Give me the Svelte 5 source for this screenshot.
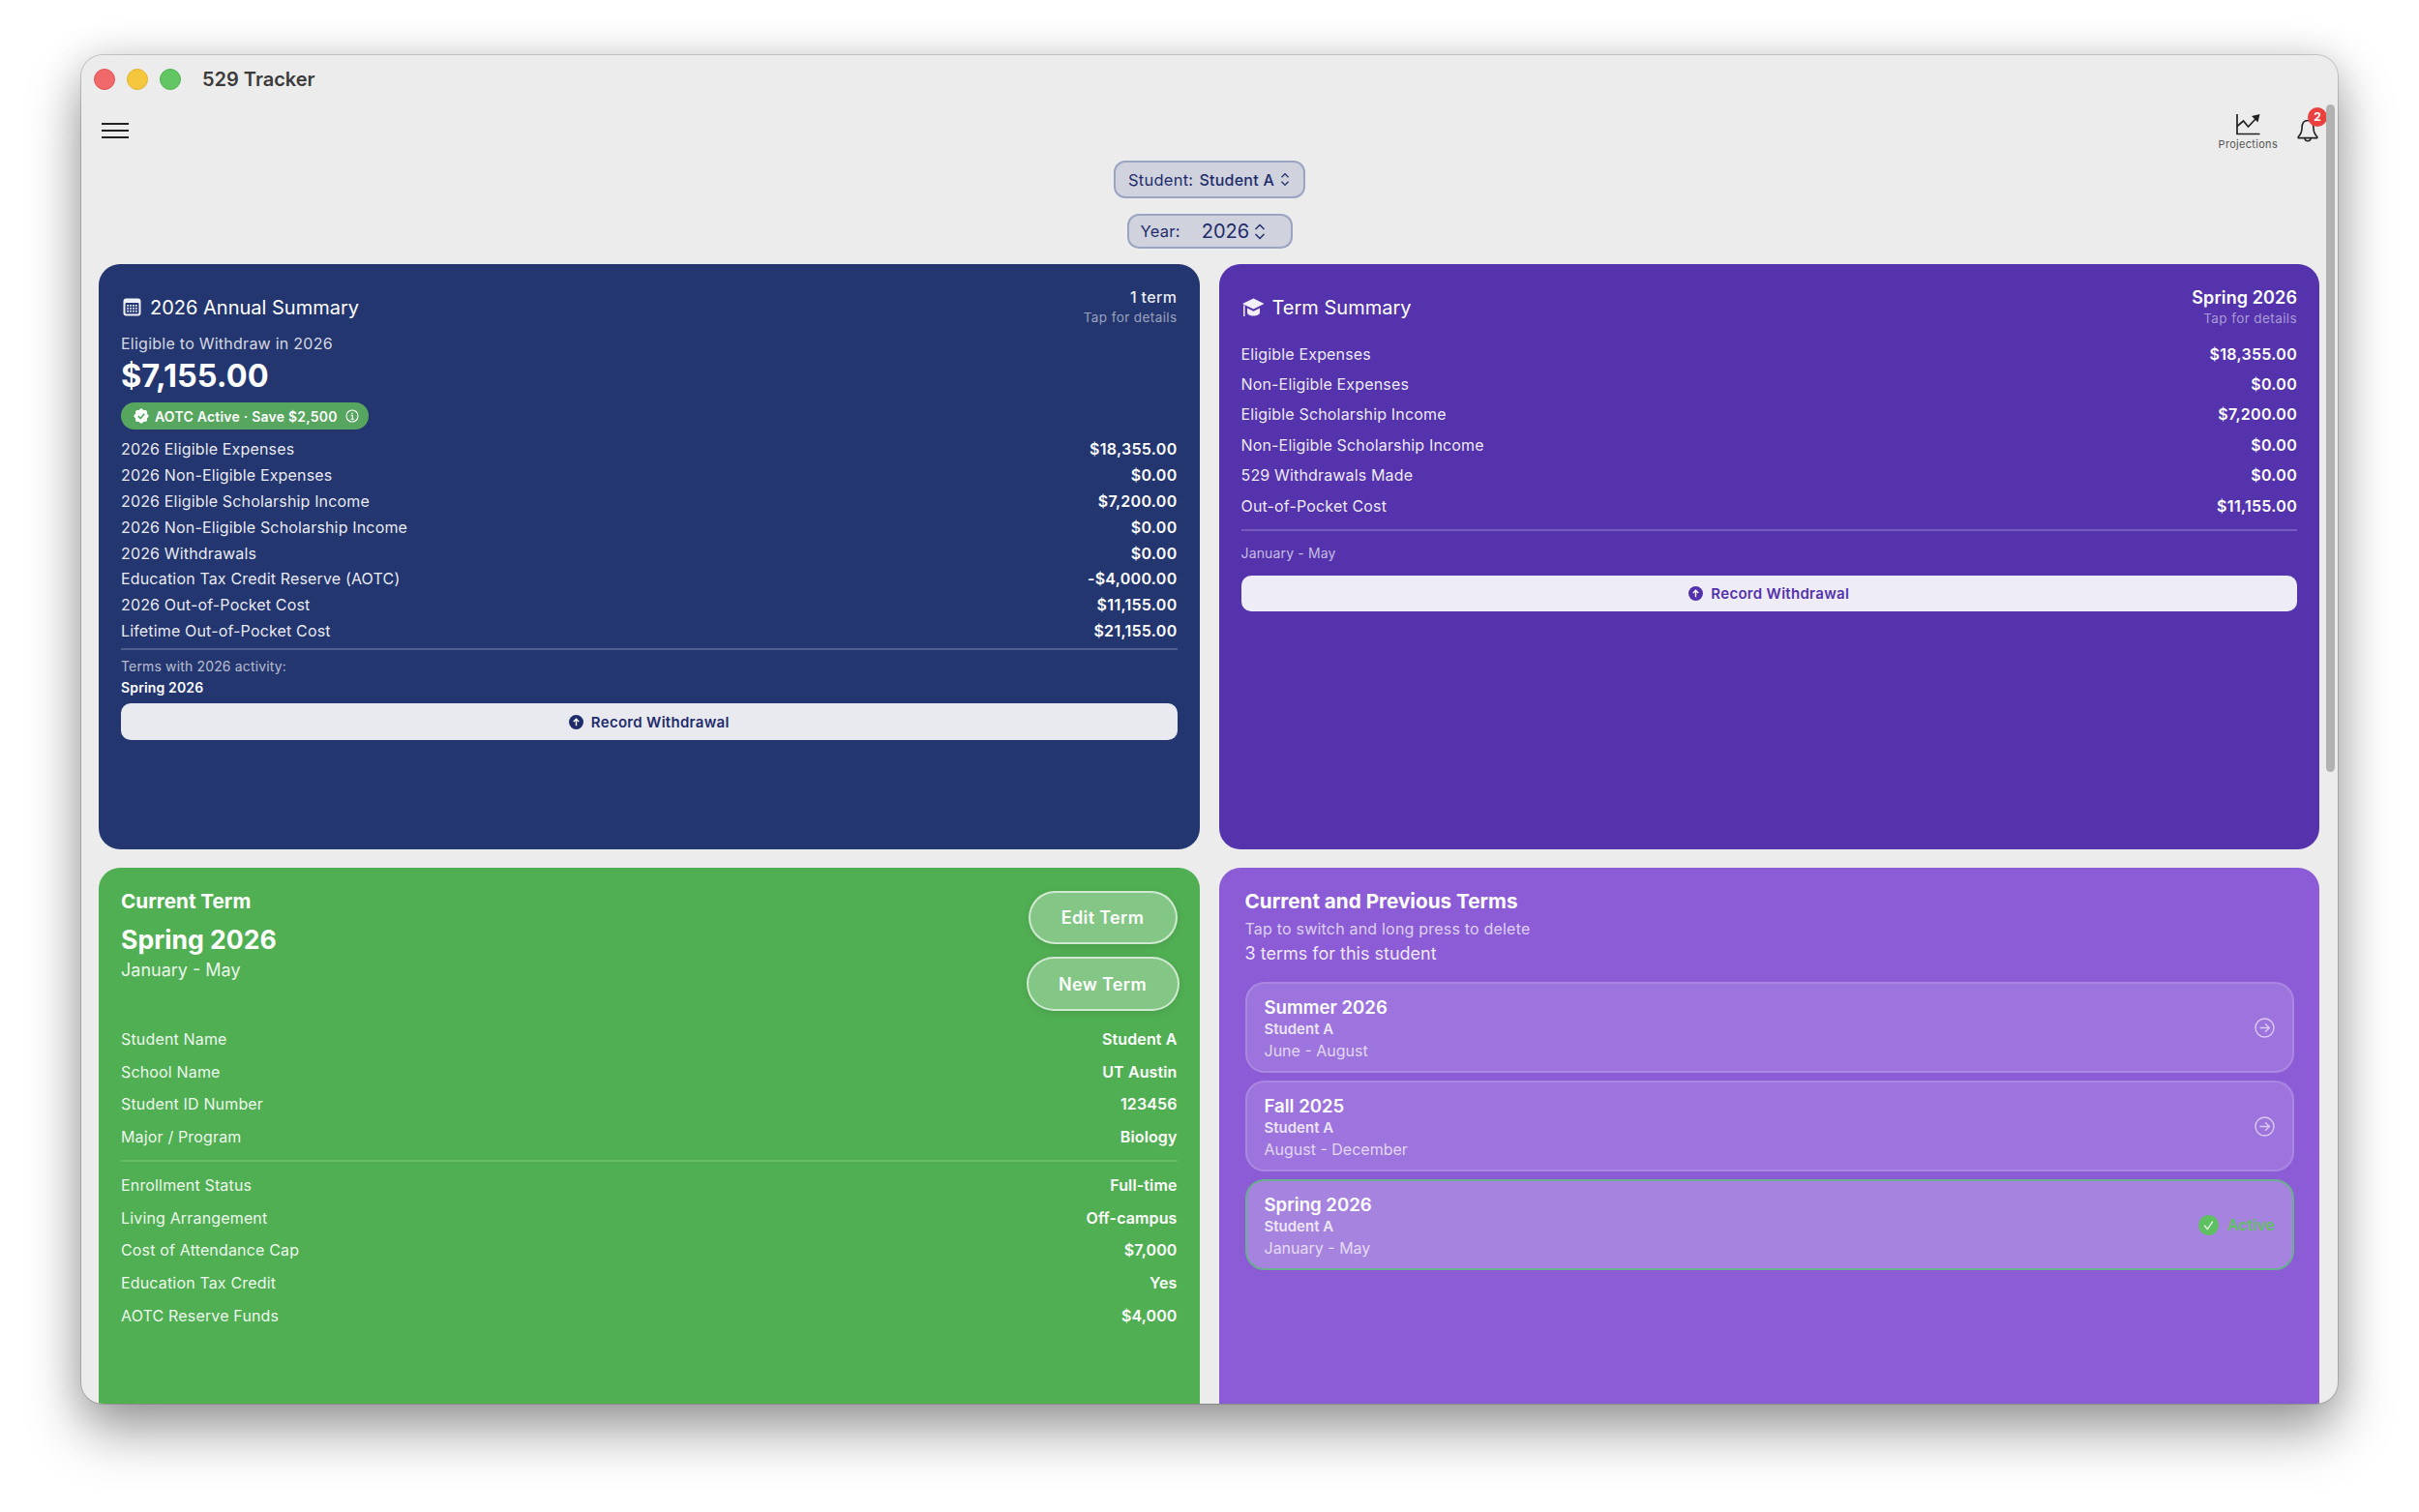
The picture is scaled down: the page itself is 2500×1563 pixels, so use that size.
<script>
  const annualRows = [
    ['2026 Eligible Expenses', '$18,355.00'],
    ['2026 Non-Eligible Expenses', '$0.00'],
    ['2026 Eligible Scholarship Income', '$7,200.00'],
    ['2026 Non-Eligible Scholarship Income', '$0.00'],
    ['2026 Withdrawals', '$0.00'],
    ['Education Tax Credit Reserve (AOTC)', '-$4,000.00'],
    ['2026 Out-of-Pocket Cost', '$11,155.00'],
    ['Lifetime Out-of-Pocket Cost', '$21,155.00']
  ];
  const termRows = [
    ['Eligible Expenses', '$18,355.00'],
    ['Non-Eligible Expenses', '$0.00'],
    ['Eligible Scholarship Income', '$7,200.00'],
    ['Non-Eligible Scholarship Income', '$0.00'],
    ['529 Withdrawals Made', '$0.00'],
    ['Out-of-Pocket Cost', '$11,155.00']
  ];
  const studentRows = [
    ['Student Name', 'Student A'],
    ['School Name', 'UT Austin'],
    ['Student ID Number', '123456'],
    ['Major / Program', 'Biology']
  ];
  const planRows = [
    ['Enrollment Status', 'Full-time'],
    ['Living Arrangement', 'Off-campus'],
    ['Cost of Attendance Cap', '$7,000'],
    ['Education Tax Credit', 'Yes'],
    ['AOTC Reserve Funds', '$4,000']
  ];
  const terms = [
    { name: 'Summer 2026', student: 'Student A', months: 'June - August' },
    { name: 'Fall 2025', student: 'Student A', months: 'August - December' },
    { name: 'Spring 2026', student: 'Student A', months: 'January - May', active: true }
  ];

  // scalloped seal outline for the AOTC badge
  let seal = '';
  for (let i = 0; i < 16; i++) {
    const r = i % 2 ? 6.1 : 7.4;
    const a = (i * Math.PI) / 8;
    seal += (i ? 'L' : 'M') + (8 + r * Math.sin(a)).toFixed(2) + ' ' + (8 - r * Math.cos(a)).toFixed(2);
  }
  seal += 'Z';
</script>

<div class="window">
  <div class="titlebar">
    <span class="light red"></span>
    <span class="light yellow"></span>
    <span class="light green"></span>
    <span class="app-title">529 Tracker</span>
  </div>

  <div class="toolbar">
    <div class="menu"><i></i><i></i><i></i></div>
    <div class="tools">
      <div class="projections">
        <svg width="26" height="23" viewBox="0 0 26 23">
          <path d="M2 1V21.5H25.5" fill="none" stroke="#222" stroke-width="1.7" />
          <path d="M2 13.5L8.5 8L13.5 14L22 5" fill="none" stroke="#222" stroke-width="1.7" />
          <path d="M17 3L25.5 1L23.5 9.5Z" fill="#222" />
        </svg>
        <span>Projections</span>
      </div>
      <div class="bell">
        <svg width="24" height="26" viewBox="0 0 24 26">
          <path d="M12 2.5C7.8 2.5 6 6 6 10.5C6 14.5 4.6 17 2.2 19.5V20.6H21.8V19.5C19.4 17 18 14.5 18 10.5C18 6 16.2 2.5 12 2.5Z" fill="none" stroke="#222" stroke-width="1.6" stroke-linejoin="round" />
          <path d="M9 20.8a3 3 0 0 0 6 0" fill="none" stroke="#222" stroke-width="1.6" />
        </svg>
        <span class="count">2</span>
      </div>
    </div>
  </div>

  <div class="pickers">
    <div class="picker student">
      <span>Student:</span>
      <span class="picked">Student A</span>
      <svg width="10" height="15" viewBox="0 0 10 15"><path d="M1.5 5.2L5 1.6L8.5 5.2M1.5 9.8L5 13.4L8.5 9.8" fill="none" stroke="currentColor" stroke-width="1.3" /></svg>
    </div>
    <div class="picker year">
      <span>Year:</span>
      <span class="year-value">2026</span>
      <svg width="12" height="17" viewBox="0 0 12 17"><path d="M1.5 6L6 1.5L10.5 6M1.5 11L6 15.5L10.5 11" fill="none" stroke="currentColor" stroke-width="1.5" /></svg>
    </div>
  </div>

  <div class="grid">
    <section class="card navy">
      <header class="card-head">
        <div class="card-title">
          <svg class="cal" width="19" height="19" viewBox="0 0 19 19">
            <rect x="0.5" y="0.5" width="18" height="18" rx="3" fill="#eef0f7" />
            <rect x="2.5" y="5" width="14" height="11.5" rx="1" fill="#243670" />
            {#each [0, 1, 2, 3] as c}
              {#each [0, 1, 2] as r}
                <rect x={4.2 + c * 2.9} y={7 + r * 2.9} width="1.8" height="1.8" fill="#dfe3f0" />
              {/each}
            {/each}
          </svg>
          <span>2026 Annual Summary</span>
        </div>
        <div class="card-side">
          <div class="side-main">1 term</div>
          <div class="side-sub">Tap for details</div>
        </div>
      </header>
      <div class="eligible">Eligible to Withdraw in 2026</div>
      <div class="amount">$7,155.00</div>
      <div class="pill">
        <svg width="16" height="16" viewBox="0 0 16 16">
          <path d={seal} fill="#fff" stroke="#fff" stroke-linejoin="round" />
          <path d="M4.8 8.2L7.2 10.6L11.2 5.8" fill="none" stroke="#57a660" stroke-width="1.7" />
        </svg>
        <span>AOTC Active · Save $2,500</span>
        <svg class="info" width="14" height="14" viewBox="0 0 14 14">
          <circle cx="7" cy="7" r="6" fill="none" stroke="#fff" stroke-width="1.1" />
          <path d="M5.6 6.2H7.3V10.2M5.5 10.2H9" fill="none" stroke="#fff" stroke-width="1.1" />
          <circle cx="7" cy="4.2" r="0.8" fill="#fff" />
        </svg>
      </div>
      <div class="rows annual">
        {#each annualRows as [label, value]}
          <div class="row"><span>{label}</span><b>{value}</b></div>
        {/each}
      </div>
      <hr class="rule annual-rule" />
      <div class="small muted">Terms with 2026 activity:</div>
      <div class="small strong">Spring 2026</div>
      <div class="record navy-text annual-record">
        <svg width="15" height="15" viewBox="0 0 15 15">
          <circle cx="7.5" cy="7.5" r="7.5" fill="currentColor" />
          <path d="M7.5 11.2V4.4M4.8 7L7.5 4.2L10.2 7" fill="none" stroke="#fff" stroke-width="1.4" />
        </svg>
        <span>Record Withdrawal</span>
      </div>
    </section>

    <section class="card violet">
      <header class="card-head">
        <div class="card-title term-title">
          <svg class="cap" width="24" height="22" viewBox="0 0 24 22">
            <path d="M12.5 1.5L1 7L12.5 12.5L23.5 7Z" fill="#f3effc" />
            <path d="M6 11.5V16C6 18 9 19.5 12.5 19.5S19 18 19 16V11.5L12.5 14.8Z" fill="#f3effc" />
            <path d="M2.8 8.4V20" fill="none" stroke="#f3effc" stroke-width="1.5" />
          </svg>
          <span>Term Summary</span>
        </div>
        <div class="card-side">
          <div class="side-term">Spring 2026</div>
          <div class="side-sub violet-sub">Tap for details</div>
        </div>
      </header>
      <div class="rows term">
        {#each termRows as [label, value]}
          <div class="row"><span>{label}</span><b>{value}</b></div>
        {/each}
      </div>
      <hr class="rule term-rule" />
      <div class="small muted">January - May</div>
      <div class="record violet-text term-record">
        <svg width="15" height="15" viewBox="0 0 15 15">
          <circle cx="7.5" cy="7.5" r="7.5" fill="currentColor" />
          <path d="M7.5 11.2V4.4M4.8 7L7.5 4.2L10.2 7" fill="none" stroke="#fff" stroke-width="1.4" />
        </svg>
        <span>Record Withdrawal</span>
      </div>
    </section>

    <section class="card green-card">
      <div class="current-head">
        <div>
          <div class="h-label">Current Term</div>
          <div class="h-term">Spring 2026</div>
          <div class="h-months">January - May</div>
        </div>
        <div class="term-buttons">
          <div class="glass edit">Edit Term</div>
          <div class="glass new">New Term</div>
        </div>
      </div>
      <div class="rows current">
        {#each studentRows as [label, value]}
          <div class="row"><span>{label}</span><b>{value}</b></div>
        {/each}
      </div>
      <hr class="rule current-rule" />
      <div class="rows current">
        {#each planRows as [label, value]}
          <div class="row"><span>{label}</span><b>{value}</b></div>
        {/each}
      </div>
    </section>

    <section class="card lilac">
      <div class="h-label">Current and Previous Terms</div>
      <div class="list-sub">Tap to switch and long press to delete</div>
      <div class="list-count">3 terms for this student</div>
      <div class="term-list">
        {#each terms as term}
          <div class="term-item" class:active={term.active}>
            <div class="item-text">
              <div class="item-name">{term.name}</div>
              <div class="item-student">{term.student}</div>
              <div class="item-months">{term.months}</div>
            </div>
            {#if term.active}
              <div class="active-tag">
                <svg width="21" height="21" viewBox="0 0 21 21">
                  <circle cx="10.5" cy="10.5" r="10.5" fill="#5fc062" />
                  <path d="M6.2 10.8L9.4 14.6L14.8 6.6" fill="none" stroke="#e8f6e8" stroke-width="1.4" />
                </svg>
                <span>Active</span>
              </div>
            {:else}
              <svg class="go" width="21" height="21" viewBox="0 0 21 21">
                <circle cx="10.5" cy="10.5" r="9.5" fill="none" stroke="#dcc9f3" stroke-width="1.4" />
                <path d="M5.4 10.5H15.2M11 6.2L15.4 10.5L11 14.8" fill="none" stroke="#dcc9f3" stroke-width="1.4" />
              </svg>
            {/if}
          </div>
        {/each}
      </div>
    </section>
  </div>

  <div class="scrollbar"></div>
</div>

<style>
  :global(body) {
    margin: 0;
    background: #fff;
    font-family: Inter, "Liberation Sans", sans-serif;
  }

  .window {
    position: relative;
    box-sizing: border-box;
    width: 2332px;
    height: 1394px;
    margin: 57px 0 106px 84px;
    overflow: hidden;
    border-radius: 22px;
    background: #ececec;
    box-shadow: 0 0 0 1px rgba(0, 0, 0, 0.16), 0 28px 56px rgba(0, 0, 0, 0.38), 0 0 40px rgba(0, 0, 0, 0.12);
  }

  .titlebar {
    display: flex;
    align-items: center;
    gap: 12px;
    height: 50px;
    padding-left: 13px;
  }

  .light {
    width: 22px;
    height: 22px;
    border-radius: 50%;
    box-sizing: border-box;
  }
  .red { background: #f0696a; border: 1px solid #e0504f; }
  .yellow { background: #f5c73e; border: 1px solid #e2b32f; }
  .green { background: #62c662; border: 1px solid #4fb351; }

  .app-title {
    margin-left: 10px;
    font-size: 20px;
    font-weight: 600;
    color: #3b3b3b;
  }

  .toolbar {
    display: flex;
    justify-content: space-between;
    align-items: flex-start;
    height: 52px;
    padding: 0 19px 0 21px;
  }

  .menu {
    display: flex;
    flex-direction: column;
    gap: 5px;
    width: 28px;
    margin-top: 20px;
  }
  .menu i {
    display: block;
    height: 2px;
    background: #222;
  }

  .tools {
    display: flex;
    align-items: flex-start;
    gap: 19px;
    margin-top: 10px;
  }

  .projections {
    display: flex;
    flex-direction: column;
    align-items: center;
    gap: 2px;
  }
  .projections svg { display: block; }
  .projections span {
    font-size: 11px;
    letter-spacing: 0.3px;
    line-height: 14px;
    color: #555;
  }

  .bell {
    position: relative;
    width: 24px;
    height: 26px;
    margin-top: 5px;
  }
  .bell svg { display: block; }
  .count {
    position: absolute;
    top: -11px;
    left: 12px;
    width: 20px;
    height: 20px;
    border-radius: 50%;
    background: #e9413f;
    color: #fff;
    font-size: 12px;
    font-weight: 700;
    line-height: 20px;
    text-align: center;
  }

  .pickers {
    display: flex;
    flex-direction: column;
    align-items: center;
    gap: 16px;
    padding-top: 7px;
    margin-bottom: 16px;
  }

  .picker {
    display: flex;
    align-items: center;
    box-sizing: border-box;
    background: #d0d3de;
    border: 2px solid #9ba5c2;
    border-radius: 12px;
    color: #1f2c6b;
    font-size: 16.5px;
    letter-spacing: 0.25px;
  }
  .picker.student {
    gap: 6px;
    width: 198px;
    height: 39px;
    padding-left: 13px;
  }
  .picked { font-weight: 500; font-size: 16px; }
  .picker.year {
    width: 171px;
    height: 36px;
    padding-left: 12px;
  }
  .year-value {
    margin-left: 22px;
    margin-right: 5px;
    font-size: 20px;
    letter-spacing: 0;
  }

  .grid {
    display: grid;
    grid-template-columns: 1fr 1fr;
    grid-template-rows: 605px 605px;
    column-gap: 20px;
    row-gap: 19px;
    padding: 0 19px 0 18px;
  }

  .card {
    box-sizing: border-box;
    border-radius: 22px;
    color: #fff;
    padding: 24px 23px 0;
  }
  .navy { background: #243670; }
  .violet { background: #5433ad; }
  .green-card { background: #51af53; padding-top: 22px; }
  .lilac { background: #8c5cd7; padding-top: 22px; padding-left: 27px; padding-right: 26px; }

  .card-head {
    display: flex;
    justify-content: space-between;
    align-items: center;
    height: 41px;
  }
  .card-title {
    display: flex;
    align-items: center;
    gap: 9px;
    font-size: 20px;
    font-weight: 400;
  }
  .term-title { gap: 8px; }
  .card-title svg { display: block; }
  .card-title .cal { margin-left: 2px; }
  .card-side { text-align: right; }
  .side-main {
    font-size: 16px;
    font-weight: 500;
    line-height: 21px;
    letter-spacing: 0.4px;
    color: rgba(255, 255, 255, 0.92);
  }
  .side-term {
    font-size: 18px;
    font-weight: 600;
    line-height: 22px;
    letter-spacing: 0.1px;
  }
  .side-sub {
    font-size: 13.5px;
    line-height: 20px;
    letter-spacing: 0.4px;
    color: rgba(255, 255, 255, 0.55);
  }
  .violet-sub { color: rgba(255, 255, 255, 0.5); }

  .eligible {
    margin-top: 7px;
    font-size: 16px;
    line-height: 20px;
    letter-spacing: 0.25px;
    color: rgba(255, 255, 255, 0.82);
  }
  .amount {
    margin-top: 4px;
    font-size: 32.5px;
    font-weight: 700;
    line-height: 40px;
  }

  .pill {
    display: inline-flex;
    align-items: center;
    height: 28px;
    margin-top: 7px;
    padding: 0 10px 0 13px;
    border-radius: 14px;
    background: #57a660;
    font-size: 14px;
    font-weight: 600;
    letter-spacing: 0.22px;
    gap: 6px;
  }
  .pill svg { display: block; }
  .pill .info { margin-left: 2px; }

  .rows { display: flex; flex-direction: column; }
  .row {
    display: flex;
    justify-content: space-between;
    align-items: center;
    font-size: 16px;
    letter-spacing: 0.16px;
    color: rgba(255, 255, 255, 0.92);
  }
  .row b {
    font-weight: 600;
    letter-spacing: 0.3px;
    color: #fff;
  }
  .annual { margin-top: 7px; }
  .annual .row { height: 26.8px; }
  .term { margin-top: 12px; }
  .term .row { height: 31.4px; }
  .current .row { height: 33.75px; }
  .current .row b { letter-spacing: 0.12px; }

  .rule {
    border: 0;
    height: 2px;
    margin: 0;
    background: rgba(255, 255, 255, 0.2);
  }
  .annual-rule { margin-top: 5px; }
  .term-rule { margin-top: 9px; }
  .current-rule { margin: 7px 0 7px; background: rgba(255, 255, 255, 0.14); }

  .small {
    font-size: 14px;
    line-height: 20px;
    letter-spacing: 0.15px;
  }
  .muted { color: rgba(255, 255, 255, 0.68); margin-top: 7px; }
  .term-rule + .muted { margin-top: 13px; }
  .strong { margin-top: 2px; font-weight: 600; }

  .record {
    display: flex;
    align-items: center;
    justify-content: center;
    gap: 8px;
    height: 38px;
    border-radius: 10px;
    font-size: 15px;
    font-weight: 600;
    letter-spacing: 0.3px;
  }
  .record svg { display: block; }
  .navy-text { background: #e9eaf0; color: #1f2c6b; }
  .violet-text { background: #eeecf6; color: #5232ac; }
  .annual-record { margin-top: 6px; }
  .term-record { margin-top: 13px; height: 37px; }

  .current-head {
    display: flex;
    justify-content: space-between;
    align-items: flex-start;
    height: 138px;
  }
  .h-label {
    font-size: 20.7px;
    font-weight: 700;
    line-height: 26px;
  }
  .h-term {
    margin-top: 8px;
    font-size: 26.6px;
    font-weight: 700;
    line-height: 36px;
  }
  .h-months {
    margin-top: 2px;
    font-size: 18px;
    line-height: 24px;
    color: rgba(255, 255, 255, 0.9);
  }

  .term-buttons {
    display: flex;
    flex-direction: column;
    align-items: center;
    gap: 13px;
    margin: 2px -2px 0 0;
  }
  .glass {
    display: flex;
    align-items: center;
    justify-content: center;
    box-sizing: border-box;
    height: 55px;
    border: 2px solid rgba(255, 255, 255, 0.62);
    border-radius: 28px;
    background: rgba(255, 255, 255, 0.29);
    box-shadow: 0 2px 8px rgba(0, 0, 0, 0.1);
    font-size: 18px;
    font-weight: 600;
    letter-spacing: 0.35px;
  }
  .edit { width: 154px; }
  .new { width: 158px; height: 56px; }

  .list-sub {
    margin-top: 3px;
    font-size: 16px;
    line-height: 24px;
    letter-spacing: 0.2px;
    color: rgba(255, 255, 255, 0.72);
  }
  .list-count {
    margin-top: 1px;
    font-size: 18px;
    line-height: 26px;
    color: rgba(255, 255, 255, 0.88);
  }

  .term-list {
    display: flex;
    flex-direction: column;
    gap: 8px;
    margin-top: 16px;
  }
  .term-item {
    display: flex;
    justify-content: space-between;
    align-items: center;
    box-sizing: border-box;
    height: 94px;
    padding: 0 18px 0 18px;
    border: 2px solid rgba(255, 255, 255, 0.14);
    border-radius: 20px;
    background: rgba(255, 255, 255, 0.15);
  }
  .term-item.active {
    background: rgba(255, 255, 255, 0.24);
    border-color: #6aae8f;
  }
  .item-text { padding-top: 1px; }
  .item-name {
    font-size: 18.6px;
    font-weight: 600;
    line-height: 24px;
  }
  .item-student {
    font-size: 15px;
    font-weight: 600;
    line-height: 22px;
    color: rgba(255, 255, 255, 0.82);
  }
  .item-months {
    font-size: 16px;
    line-height: 22px;
    color: rgba(255, 255, 255, 0.72);
  }
  .active-tag {
    display: flex;
    align-items: center;
    gap: 9px;
    color: #5fc062;
    font-size: 16px;
    font-weight: 600;
  }
  .active-tag svg, .go { display: block; }

  .scrollbar {
    position: absolute;
    top: 51px;
    right: 3px;
    width: 9px;
    height: 690px;
    border-radius: 5px;
    background: #b2b2b2;
  }
</style>
